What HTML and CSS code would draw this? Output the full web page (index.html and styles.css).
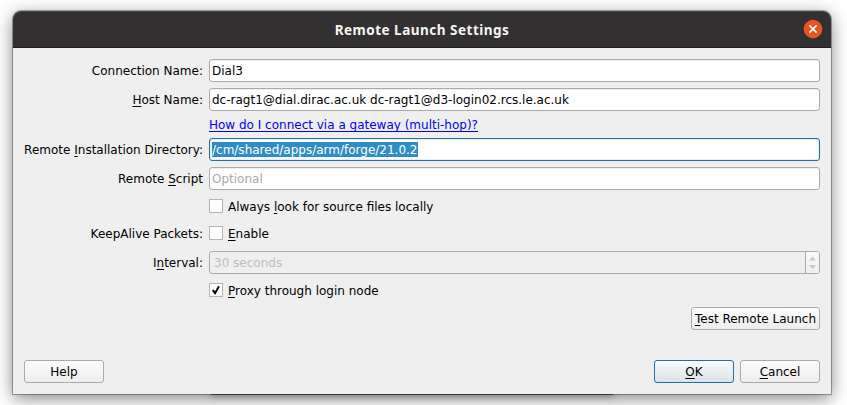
FILE: index.html
```html
<!DOCTYPE html>
<html lang="en">
<head>
<meta charset="utf-8">
<title>Remote Launch Settings</title>
<link rel="stylesheet" href="styles.css">
</head>
<body>
<div class="back-window"></div>
<main class="dialog">
  <header class="titlebar">
    <h1 class="title">Remote Launch Settings</h1>
    <svg class="close" viewBox="0 0 20 20" width="20" height="20"><circle cx="10" cy="10" r="9.3" fill="#e95420"/><path d="M6.4 6.4l7.2 7.2M13.6 6.4l-7.2 7.2" stroke="#fff" stroke-width="1.5"/></svg>
  </header>
  <div class="form">
    <span class="label">Connection Name:</span>
    <div class="field">Dial3</div>
    <span class="label"><u>H</u>ost Name:</span>
    <div class="field">dc-ragt1@dial.dirac.ac.uk dc-ragt1@d3-login02.rcs.le.ac.uk</div>
    <a class="link second">How do I connect via a gateway (multi-hop)?</a>
    <span class="label">Remote <u>I</u>nstallation Directory:</span>
    <div class="field focused"><span class="selected">/cm/shared/apps/arm/forge/21.0.2</span></div>
    <span class="label">Remote <u>S</u>cript</span>
    <div class="field placeholder">Optional</div>
    <div class="check second"><span class="box"></span><span class="check-text">Always <u>l</u>ook for source files locally</span></div>
    <span class="label keepalive">KeepAlive Packets:</span>
    <div class="check"><span class="box"></span><span class="check-text"><u>E</u>nable</span></div>
    <span class="label">I<u>n</u>terval:</span>
    <div class="field spin"><span class="spin-text">30 seconds</span><span class="arrows"><svg viewBox="0 0 13 21" width="13" height="21"><path d="M3 8.500l3.500-4 3.500 4zM3 13h7l-3.500 4z" fill="#c8c8c8"/></svg></span></div>
    <div class="check second"><span class="box"><svg viewBox="0 0 12 12" width="12" height="12"><path d="M2.700 6L5 9.200 9 2.300" fill="none" stroke="#000" stroke-width="2"/></svg></span><span class="check-text"><u>P</u>roxy through login node</span></div>
    <div class="button test second"><span><u>T</u>est Remote Launch</span></div>
  </div>
  <footer class="actions">
    <div class="button help">Help</div>
    <div class="button default"><span><u>O</u>K</span></div>
    <div class="button"><span><u>C</u>ancel</span></div>
  </footer>
</main>
</body>
</html>
```
FILE: styles.css
```css
* {
  box-sizing: border-box;
}

body {
  position: relative;
  height: 405px;
  margin: 0;
  padding: 11px 16px 0 13px;
  overflow: hidden;
  background: #fff;
  color: #000;
  font: 12px/15px "DejaVu Sans", sans-serif;
  white-space: nowrap;
}

.back-window {
  position: absolute;
  left: 211px;
  top: 380px;
  width: 402px;
  height: 15px;
  background: #777;
  box-shadow: 0 1px 9px rgba(0, 0, 0, .3);
}

.dialog {
  position: relative;
  display: flex;
  flex-direction: column;
  width: 818px;
  height: 383px;
  border-radius: 8px 8px 0 0;
  background: #efefef;
  box-shadow: 0 0 0 1px rgba(0, 0, 0, .3), 0 4px 17px rgba(0, 0, 0, .5);
}

.titlebar {
  display: grid;
  grid-template-columns: 20px 1fr 20px;
  align-items: center;
  height: 37px;
  padding: 0 8px;
  border-top: 1px solid #484646;
  border-bottom: 1px solid #211b20;
  border-radius: 8px 8px 0 0;
  background: #333031;
}

.close {
  position: relative;
  top: -1px;
}

.title {
  grid-column: 2;
  margin: 0;
  color: #f5f5f5;
  font: bold 13.500px/18px "Noto Sans", sans-serif;
  letter-spacing: .5px;
  text-align: center;
}

.form {
  display: grid;
  grid-template-columns: 179px 611px;
  grid-template-rows: 23px 23px 15px 23px 23px 21px 22px 23px 21px 23px;
  gap: 6px;
  padding: 11px 11px 0;
}

.second {
  grid-column: 2;
}

.label {
  padding-top: 5px;
  text-align: right;
}

.keepalive {
  padding-top: 4px;
}

u {
  text-decoration-thickness: 1px;
  text-underline-offset: 2px;
  text-decoration-skip-ink: none;
}

.field {
  height: 23px;
  padding: 4px 2px 2px;
  border: 1px solid #ababab;
  border-radius: 3px;
  background: #fff;
  box-shadow: inset 0 1px #efefef;
}

.focused {
  padding-top: 3px;
  border-color: #266f9f;
  box-shadow: inset 0 0 0 1px #e0edf5;
}

.selected {
  display: inline-block;
  height: 15px;
  line-height: 17px;
  background: #308cc6;
  color: #fff;
}

.placeholder {
  color: #aaa;
}

.link {
  justify-self: start;
  padding-top: 1px;
  color: #00f;
  text-decoration: underline 1px;
  text-decoration-skip-ink: none;
  text-underline-offset: 2px;
}

.check {
  display: flex;
  gap: 5px;
  padding-top: 3px;
}

.check-text {
  padding-top: 1px;
}

.box {
  width: 14px;
  height: 14px;
  border: 1px solid #b5b5b5;
  background: #fff;
}

.box svg,
.arrows svg {
  display: block;
}

.spin {
  display: flex;
  justify-content: space-between;
  padding: 0;
  background: #efefef;
  color: #bebebe;
}

.spin-text {
  padding: 4px;
}

.arrows {
  width: 14px;
  border-left: 1px solid #ababab;
  border-radius: 0 2px 2px 0;
  background: linear-gradient(#fafafa, #efefef);
}

.button {
  display: flex;
  align-items: center;
  justify-content: center;
  width: 80px;
  height: 23px;
  padding-top: 2px;
  border: 1px solid #ababab;
  border-radius: 3px;
  background: linear-gradient(#fdfdfd, #ededed);
}

.test {
  justify-self: end;
  width: 129px;
}

.default {
  border-color: #266f9f;
  background: linear-gradient(#fafcfd, #dbe2e8);
}

.actions {
  display: flex;
  gap: 6px;
  margin-top: auto;
  padding: 0 11px 11px;
}

.help {
  margin-right: auto;
}
```
